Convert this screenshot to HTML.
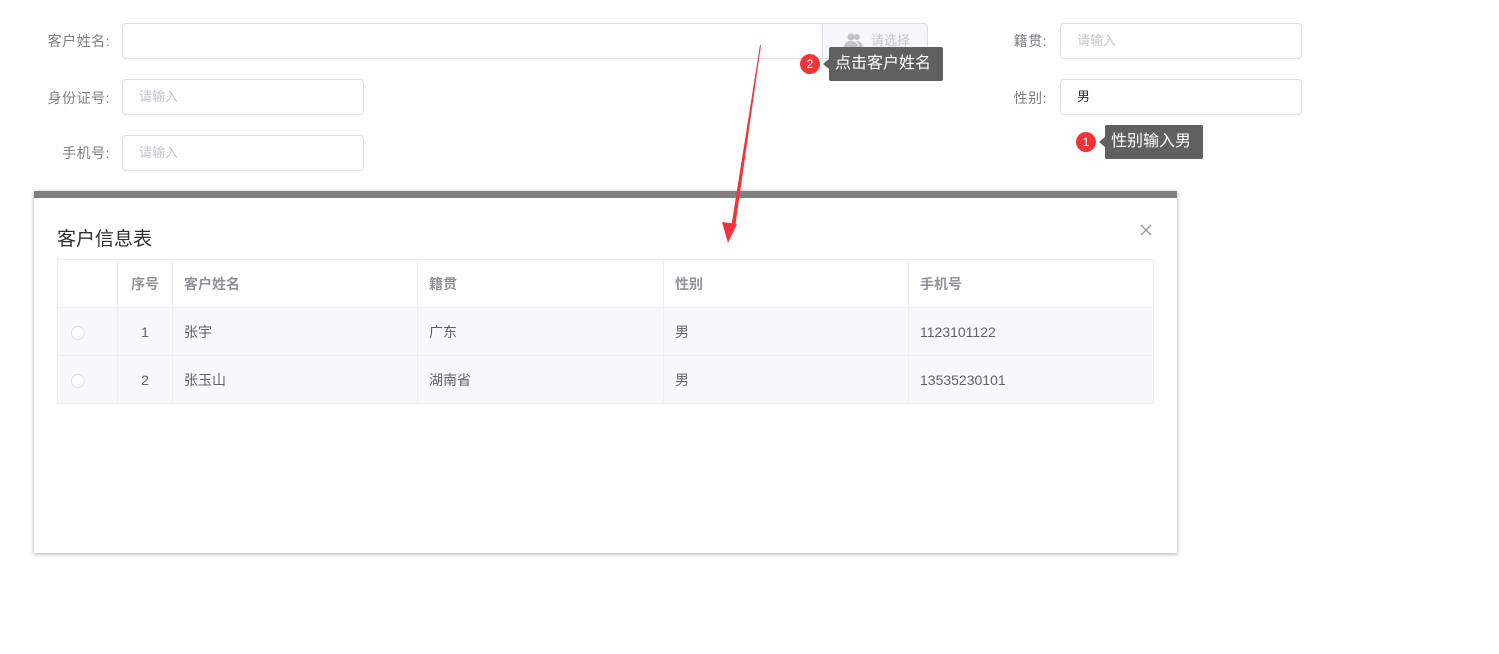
<!DOCTYPE html><html><head><meta charset="utf-8"><style>
*{margin:0;padding:0;box-sizing:border-box}
body{width:1499px;height:654px;background:#fff;position:relative;overflow:hidden;font-family:"Liberation Sans","Noto Sans CJK SC",sans-serif;font-size:14px;color:#606266}
.a{position:absolute}
.lbl{position:absolute;text-align:right;color:#7d7f84;font-size:14px;letter-spacing:0.5px}
.inp{position:absolute;border:1px solid #dcdfe6;border-radius:4px;height:36px;line-height:34px;padding-left:16px;color:#c0c4cc;font-size:13px}
.tip{position:absolute;background:#606060;color:#fff;font-size:16px;height:34px;line-height:34px;padding:0 6px;border-radius:2px}
.badge{position:absolute;width:20px;height:20px;border-radius:50%;background:#f0353a;color:#fff;font-size:12px;text-align:center;line-height:20px}
table{border-collapse:collapse;position:absolute;left:57px;top:259px;width:1097px;font-size:14px}
td,th{border:1px solid #ebeef5;height:48px;padding-left:11px;text-align:left}
th{color:#909399;font-weight:bold;background:#fff}
tr.r td{background:#f7f8fa}
.rad{display:inline-block;width:14px;height:14px;border:1px solid #dcdfe6;border-radius:50%;background:#fff;margin-left:2px;vertical-align:middle}
</style></head><body>
<div class="lbl" style="left:30px;top:31px;width:80px">客户姓名:</div>
<div class="inp" style="left:122px;top:23px;width:806px;border-radius:4px"></div>
<div class="a" style="left:822px;top:23px;width:106px;height:36px;background:#f5f7fa;border:1px solid #dcdfe6;border-radius:0 4px 4px 0;color:#c0c4cc;font-size:13px;line-height:34px;padding-left:48px">请选择</div>
<svg class="a" style="left:844px;top:33px" width="20" height="16" viewBox="0 0 20 16"><circle cx="7" cy="4" r="3.5" fill="#c0c4cc"/><path d="M0 15c0-5 3-7 7-7s7 2 7 7z" fill="#c0c4cc"/><circle cx="13" cy="4" r="3" fill="#c0c4cc"/><path d="M12 8c4 0 7 2 7 7h-4c0-3-1-5-3-7z" fill="#c0c4cc"/></svg>
<div class="lbl" style="left:960px;top:31px;width:87px">籍贯:</div>
<div class="inp" style="left:1060px;top:23px;width:242px">请输入</div>
<div class="lbl" style="left:30px;top:88px;width:80px">身份证号:</div>
<div class="inp" style="left:122px;top:79px;width:242px">请输入</div>
<div class="lbl" style="left:960px;top:88px;width:87px">性别:</div>
<div class="inp" style="left:1060px;top:79px;width:242px;color:#303133">男</div>
<div class="lbl" style="left:30px;top:143px;width:80px">手机号:</div>
<div class="inp" style="left:122px;top:135px;width:242px">请输入</div>
<div class="badge" style="left:800px;top:54px">2</div>
<div class="tip" style="left:829px;top:47px;width:114px">点击客户姓名</div>
<div class="a" style="left:823px;top:59px;border:5px solid transparent;border-right:6px solid #606060;border-left:0"></div>
<div class="badge" style="left:1076px;top:132px">1</div>
<div class="tip" style="left:1105px;top:125px;width:98px">性别输入男</div>
<div class="a" style="left:1099px;top:137px;border:5px solid transparent;border-right:6px solid #606060;border-left:0"></div>
<div class="a" style="left:34px;top:191px;width:1143px;height:362px;background:#fff;box-shadow:0 1px 4px rgba(0,0,0,.35);border-top:7px solid #7f7f7f"></div>
<div class="a" style="left:57px;top:224px;font-size:19px;color:#303133">客户信息表</div>
<svg class="a" style="left:1140px;top:224px" width="12" height="12"><path d="M1 1L11 11M11 1L1 11" stroke="#909399" stroke-width="1.3"/></svg>
<table>
<tr><th style="width:60px"></th><th style="width:55px;text-align:center;padding:0">序号</th><th style="width:245px">客户姓名</th><th style="width:246px">籍贯</th><th style="width:245px">性别</th><th>手机号</th></tr>
<tr class="r"><td><span class="rad"></span></td><td style="text-align:center;padding:0">1</td><td>张宇</td><td>广东</td><td>男</td><td>1123101122</td></tr>
<tr class="r"><td><span class="rad"></span></td><td style="text-align:center;padding:0">2</td><td>张玉山</td><td>湖南省</td><td>男</td><td>13535230101</td></tr>
</table>
<svg class="a" style="left:0;top:0" width="1499" height="654"><path d="M760 45 L761 45 L735 228 L731 228 Z" fill="#f0353a"/><path d="M722 222 L728 243 L737 224 Z" fill="#f0353a"/></svg>
</body></html>
